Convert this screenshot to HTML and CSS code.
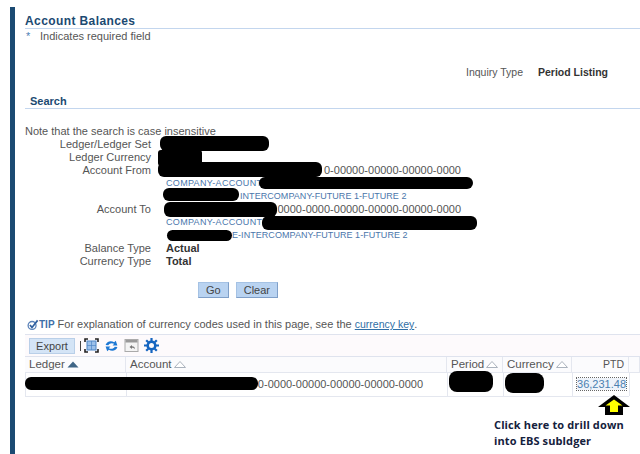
FILE: index.html
```html
<!DOCTYPE html>
<html lang="en">
<head>
	<meta charset="UTF-8">
	<title>Account Balances</title>
	<link rel="stylesheet" href="styles.css">
</head>
<body>
	<div class="page">
		<h1 class="title">Account Balances</h1>
		<p class="required"><span class="star">*</span>Indicates required field</p>

		<div class="inquiry"><span>Inquiry Type</span><b>Period Listing</b></div>

		<h2 class="subtitle">Search</h2>
		<p class="note">Note that the search is case insensitive</p>

		<div class="form">
			<div class="lbl">Ledger/Ledger Set</div><div></div>
			<div class="lbl">Ledger Currency</div><div></div>
			<div class="lbl">Account From</div><div class="acct">0-00000-00000-00000-0000</div>
			<div></div><div class="seg">COMPANY-ACCOUNT-</div>
			<div></div><div class="seg seg2">INTERCOMPANY-FUTURE 1-FUTURE 2</div>
			<div class="lbl">Account To</div><div class="acct">0000-0000-00000-00000-00000-0000</div>
			<div></div><div class="seg">COMPANY-ACCOUNT-</div>
			<div></div><div class="seg seg3">E-INTERCOMPANY-FUTURE 1-FUTURE 2</div>
			<div class="lbl">Balance Type</div><div class="val">Actual</div>
			<div class="lbl">Currency Type</div><div class="val">Total</div>
		</div>

		<div class="buttons">
			<button class="btn">Go</button>
			<button class="btn">Clear</button>
		</div>

		<p class="tip">
			<svg class="tip-icon" width="12" height="12" viewBox="0 0 13 12"><circle cx="5.500" cy="6.500" r="4.300" fill="none" stroke="#5b82b8" stroke-width="1.400"/><path d="M3.200 6l2.200 2.600L11.500 1" fill="none" stroke="#2f5f9f" stroke-width="1.800"/></svg><b>TIP</b><span class="tip-text">For explanation of currency codes used in this page, see the <a href="#">currency key</a>.</span>
		</p>

		<div class="results">
			<div class="toolbar">
				<button class="export">Export</button>
				<span class="pipe"></span>
				<svg width="15" height="15" viewBox="0 0 15 15"><rect x="3" y="3" width="9" height="9" fill="#9cc0ea" stroke="#4f86c6"/><path d="M1 4V1h3M11 1h3v3M14 11v3h-3M4 14H1v-3" fill="none" stroke="#222" stroke-width="1.600"/><path d="M7.500 3v9M3 7.500h9" stroke="#4f86c6" stroke-width=".7"/></svg>
				<svg width="15" height="14" viewBox="0 0 14 13"><path d="M1.500 5.500C2.500 2 6.500 1 9.500 3L11 1.500 12.500 6H8l1.500-1.500C7.500 3.300 5 3.800 4 5.800z" fill="#1c78d4"/><path d="M12.500 7.500C11.500 11 7.500 12 4.500 10L3 11.500 1.500 7H6L4.500 8.500C6.500 9.700 9 9.200 10 7.200z" fill="#1c78d4"/></svg>
				<svg class="detach" width="15" height="13" viewBox="0 0 14 13"><rect x=".5" y=".5" width="13" height="12" fill="#f4f4f4" stroke="#aaa"/><rect x="1" y="1" width="12" height="2.500" fill="#999"/><path d="M5 8l2.500-2v1.300c2 0 3 1 3 3-.7-1-1.500-1.500-3-1.500V10z" fill="#777"/></svg>
				<svg width="15" height="15" viewBox="0 0 15 15"><circle cx="7.500" cy="7.500" r="3.800" fill="none" stroke="#1565c0" stroke-width="2.600"/><path d="M7.500 0v3M7.500 12v3M0 7.500h3M12 7.500h3M2.200 2.200l2.100 2.100M10.700 10.700l2.100 2.100M2.200 12.800l2.100-2.100M10.700 4.300l2.100-2.100" stroke="#1565c0" stroke-width="2.200"/></svg>
			</div>
			<div class="grid head">
				<div>Ledger<svg class="sort" width="12" height="7" viewBox="0 0 12 7"><path d="M6 .5L11.500 6.500H.5z" fill="#3f6586"/></svg></div>
				<div>Account<svg class="sort" width="12" height="7" viewBox="0 0 12 7"><path d="M6 .5L11.500 6.500H.5z" fill="#fff" stroke="#aab2bd"/></svg></div>
				<div>Period<svg class="sort" width="12" height="7" viewBox="0 0 12 7"><path d="M6 .5L11.500 6.500H.5z" fill="#fff" stroke="#aab2bd"/></svg></div>
				<div>Currency<svg class="sort" width="12" height="7" viewBox="0 0 12 7"><path d="M6 .5L11.500 6.500H.5z" fill="#fff" stroke="#aab2bd"/></svg></div>
				<div class="num ptd">PTD</div>
				<div></div>
			</div>
			<div class="grid row">
				<div></div>
				<div class="row-acct">0-0000-00000-00000-00000-0000</div>
				<div></div>
				<div></div>
				<div class="num"><a href="#" class="amount">36,231.48</a></div>
			</div>
		</div>
	</div>

	<!-- redaction marks drawn over the page -->
	<div class="blot b1"></div>
	<div class="blot b2"></div>
	<div class="blot b3"></div>
	<div class="blot b4"></div>
	<div class="blot b5"></div>
	<div class="blot b6"></div>
	<div class="blot b7"></div>
	<div class="blot b8"></div>
	<div class="blot b9"></div>
	<div class="blot b10"></div>
	<div class="blot b11"></div>

	<svg class="arrow" width="32" height="20" viewBox="0 0 32 20"><path d="M16 0L32 12h-7V20H7v-8H0z" fill="#000"/><path d="M16 4.500L24.500 10.500H20v6.500h-8v-6.500H7.500z" fill="#ff0"/></svg>
	<p class="callout">Click here to drill down<br>into EBS subldger</p>
</body>
</html>
```

FILE: styles.css
```css
*{margin: 0;padding: 0;box-sizing: border-box;}
html,body{height: 454px;overflow: hidden;background: #fff;}
body{position: relative;padding: 7px 0 0 10px;font: 11px/13px "Liberation Sans",Arial,sans-serif;color: #555;}
.page{height: 447px;border-left: 5px solid #1b4a72;padding: 7px 0 0 10px;}

.title{font-size: 12px;line-height: 14px;color: #1b4a72;letter-spacing: .4px;border-bottom: 1px solid #c3d6ee;height: 15px;}
.required{margin-top: 1px;line-height: 13px;}
.star{display: inline-block;width: 15px;padding-left: 1px;color: #4f7fb5;}

.inquiry{display: flex;justify-content: flex-end;gap: 15px;margin-top: 23px;padding-right: 32px;height: 13px;font-size: 10.500px;}
.inquiry b{color: #333;}

.subtitle{margin-top: 15px;padding-left: 5px;font-size: 11px;line-height: 14px;height: 15px;color: #1b4a72;border-bottom: 1px solid #c3d6ee;}
.note{margin-top: 16px;}

.form{display: grid;grid-template-columns: 126px 1fr;grid-auto-rows: 13px;column-gap: 15px;}
.lbl{text-align: right;white-space: nowrap;}
.acct{width: 295px;text-align: right;white-space: nowrap;}
.val{font-weight: bold;color: #333;}
.seg{font-size: 9px;letter-spacing: .32px;color: #4a76ab;white-space: nowrap;}
.seg2{padding-left: 74px;letter-spacing: .05px;}
.seg3{padding-left: 66px;letter-spacing: .05px;}

.buttons{display: flex;gap: 7px;margin: 14px 0 0 173px;}
.btn{height: 16px;padding: 0 7px;font: 11px "Liberation Sans",Arial,sans-serif;color: #444;background: #b9d3f1;border: 1px solid #a5c2e4;border-bottom-color: #7f9fc8;border-right-color: #7f9fc8;}

.tip{display: flex;align-items: center;margin: 20px 0 0 2px;height: 13px;white-space: nowrap;}
.tip b{font-size: 10px;margin-right: 3px;color: #3f6fa8;}
.tip a{font-size: 10.500px;color: #2f6ea5;}

.results{margin-top: 3px;border-top: 1px solid #dfe3ee;}
.toolbar{display: flex;align-items: center;gap: 5px;height: 22px;padding-left: 4px;background: #fdfafc;border-bottom: 1px solid #dfe3ee;}
.export{width: 46px;height: 16px;font: 11px "Liberation Sans",Arial,sans-serif;color: #444;background: #d4e4f6;border: 1px solid #b9cfe8;}
.pipe{width: 1px;height: 10px;margin-right: -2px;background: #444;}

.grid{display: grid;grid-template-columns: 101px 321px 56px 69px 57px 11px;}
.grid > div{border-right: 1px solid #e4e7ef;padding-left: 4px;white-space: nowrap;}
.head{height: 16px;line-height: 15px;font-size: 11.500px;background: #fbfbfd;border-bottom: 1px solid #e4e7ef;}
.row{width: 604px;grid-template-columns: 101px 321px 56px 69px 57px;height: 24px;line-height: 23px;border-bottom: 1px solid #e4e7ef;border-left: 1px solid #e4e7ef;}
.grid > .num{text-align: right;padding-right: 3px;}
.grid > .ptd{font-size: 10.500px;padding-right: 4px;}
.row-acct{text-align: right;padding-right: 24px;}
.amount{color: #4a7fb0;text-decoration: none;outline: 1px dotted #666;background: #eef3fa;}

.sort{margin-left: 2px;}

.blot{position: absolute;background: #000;border-radius: 6px;}
.b1{left: 160px;top: 136px;width: 109px;height: 15px;}
.b2{left: 158px;top: 150px;width: 44px;height: 16px;border-radius: 3px;}
.b3{left: 158px;top: 162px;width: 164px;height: 15px;}
.b4{left: 259px;top: 177px;width: 214px;height: 12px;}
.b5{left: 163px;top: 188px;width: 76px;height: 13px;}
.b6{left: 164px;top: 202px;width: 113px;height: 15px;}
.b7{left: 262px;top: 216px;width: 215px;height: 14px;}
.b8{left: 167px;top: 230px;width: 65px;height: 11px;}
.b9{left: 25px;top: 377px;width: 233px;height: 13px;}
.b10{left: 449px;top: 371px;width: 44px;height: 21px;border-radius: 8px;}
.b11{left: 505px;top: 373px;width: 39px;height: 20px;border-radius: 8px;}

.arrow{position: absolute;left: 598px;top: 395px;}
.callout{position: absolute;left: 494px;top: 417px;font: bold 11px/16px "Open Sans",sans-serif;letter-spacing: .12px;color: #14213d;white-space: nowrap;}
```
